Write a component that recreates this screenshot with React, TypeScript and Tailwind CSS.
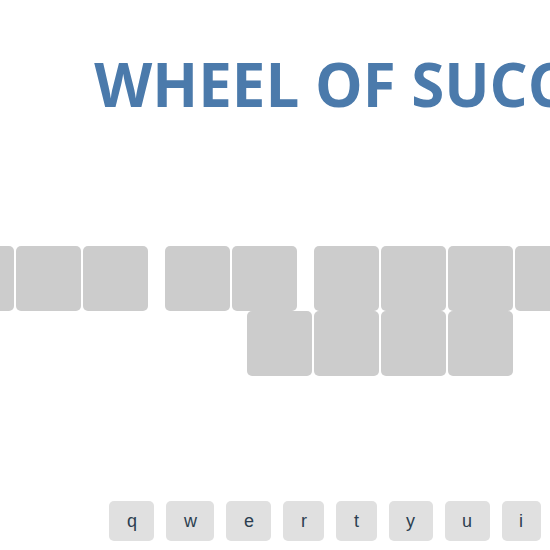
const rowOne = [4, 2, 4, 2, 2];
const rowTwo = [4];
const keyRows = ['qwertyuiop', 'asdfghjkl', 'zxcvbnm'];

const Tile = () => (
  <div className="mx-px h-[65px] w-[65px] shrink-0 rounded-[5px] bg-[#cccccc]" />
);

const BoardRow = ({ words }: { words: number[] }) => (
  <div className="flex justify-center">
    {words.map((count, i) => (
      <div key={i} className="flex shrink-0">
        {i > 0 && <div className="w-[15px] shrink-0" />}
        {Array.from({ length: count }).map((_, j) => (
          <Tile key={j} />
        ))}
      </div>
    ))}
  </div>
);

export default function App() {
  return (
    <div className="min-h-[550px] w-[760px] bg-white">
      {/* Title */}
      <h1 className="pt-[52px] text-center font-['Open_Sans',sans-serif] text-[60px] font-bold leading-[64px] whitespace-nowrap text-[#4b7aab]">
        WHEEL OF SUCCESS
      </h1>

      {/* Puzzle board */}
      <div className="mt-[130px] flex flex-col">
        <BoardRow words={rowOne} />
        <BoardRow words={rowTwo} />
      </div>

      {/* Keyboard */}
      <div className="mt-[125px] flex flex-col gap-3 pl-[4px]">
        {keyRows.map((row) => (
          <div key={row} className="flex justify-center">
            {row.split('').map((letter) => (
              <button
                key={letter}
                className="mx-[6px] flex h-[40px] items-center rounded-[5px] bg-[#e0e0e0] px-[17.5px] font-['Liberation_Sans',Arial,sans-serif] text-[18px] text-[#2c3e50]"
              >
                {letter}
              </button>
            ))}
          </div>
        ))}
      </div>
    </div>
  );
}
